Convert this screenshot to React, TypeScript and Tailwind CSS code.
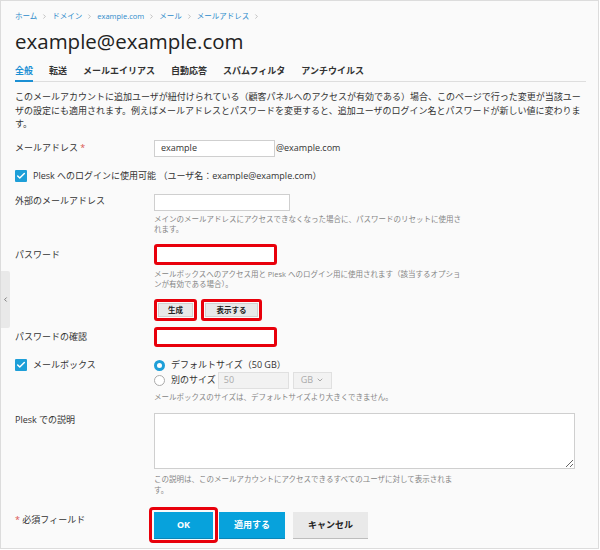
import { Check, ChevronDown, ChevronRight, ChevronLeft } from "lucide-react";

const crumbs = ["ホーム", "ドメイン", "example.com", "メール", "メールアドレス"];
const tabs = ["全般", "転送", "メールエイリアス", "自動応答", "スパムフィルタ", "アンチウイルス"];

function CheckBox() {
    return (
        <span className="flex h-[12px] w-[12px] items-center justify-center rounded-[1px] bg-[#1e9fd8]">
            <Check size={10} strokeWidth={3.5} color="#fff" />
        </span>
    );
}

function Help({ lines }: { lines: string[] }) {
    return (
        <div className="text-[7.5px] leading-[10.5px] text-[#858585]">
            {lines.map((l, i) => (
                <div key={i} className="whitespace-nowrap">
                    {l}
                </div>
            ))}
        </div>
    );
}

export default function App() {
    return (
        <div className="h-[550px] w-[600px] bg-white font-['Open_Sans','Noto_Sans_CJK_JP',sans-serif] text-[#333]">
            <div className="relative h-[549px] w-[599px] overflow-hidden border border-[#dcdcdc] bg-[#fafafa] pl-[14px] pr-[12px] pt-[10px]">
                {/* side collapse handle */}
                <div className="absolute left-0 top-[270px] flex h-[57px] w-[9px] items-center justify-center rounded-r-[2px] bg-[#e9e9e9]">
                    <ChevronLeft size={7} strokeWidth={2.5} color="#555" />
                </div>

                <div className="flex h-[10px] items-center gap-[4px] text-[7.5px] leading-[10px] text-[#2d8bcb]">
                    {crumbs.map((c) => (
                        <span key={c} className="flex items-center gap-[4px]">
                            {c}
                            <ChevronRight size={7} strokeWidth={2} color="#999" />
                        </span>
                    ))}
                </div>

                <h1 className="mt-[7px] h-[26px] text-[20.5px] leading-[26px] text-[#222]">example@example.com</h1>

                <div className="mt-[11px] flex gap-[16px] border-b border-[#dedede]">
                    {tabs.map((t, i) => (
                        <div
                            key={t}
                            className={
                                i === 0
                                    ? "-mb-px border-b-2 border-[#1c90d4] pb-[3px] text-[9px] font-bold leading-[12px] text-[#1c90d4]"
                                    : "-mb-px border-b-2 border-transparent pb-[3px] text-[9px] font-bold leading-[12px] text-[#333]"
                            }
                        >
                            {t}
                        </div>
                    ))}
                </div>

                <div className="mt-[8px] text-[9px] leading-[13.5px] text-[#333]">
                    <div className="whitespace-nowrap">
                        このメールアカウントに追加ユーザが紐付けられている（顧客パネルへのアクセスが有効である）場合、このページで行った変更が当該ユー
                    </div>
                    <div className="whitespace-nowrap">
                        ザの設定にも適用されます。例えばメールアドレスとパスワードを変更すると、追加ユーザのログイン名とパスワードが新しい値に変わりま
                    </div>
                    <div>す。</div>
                </div>

                {/* mail address */}
                <div className="mt-[9px] flex h-[17px] items-center text-[9px]">
                    <div className="w-[139px]">
                        メールアドレス <span className="text-[#d9534f]">*</span>
                    </div>
                    <div className="flex h-[17px] w-[121px] items-center border border-[#cfcfcf] bg-white px-[6px] text-[9px]">
                        example
                    </div>
                    <span className="ml-[1px]">@example.com</span>
                </div>

                <div className="mt-[13px] flex h-[13px] items-center gap-[6px] text-[9px]">
                    <CheckBox />
                    <span>Plesk へのログインに使用可能 （ユーザ名：example@example.com）</span>
                </div>

                {/* external address */}
                <div className="mt-[11px] flex text-[9px]">
                    <div className="w-[139px] leading-[14px]">外部のメールアドレス</div>
                    <div>
                        <div className="h-[17px] w-[136px] border border-[#cfcfcf] bg-white" />
                        <div className="mt-[3px]">
                            <Help lines={["メインのメールアドレスにアクセスできなくなった場合に、パスワードのリセットに使用さ", "れます。"]} />
                        </div>
                    </div>
                </div>

                {/* password */}
                <div className="mt-[9px] flex text-[9px]">
                    <div className="w-[139px] leading-[21px]">パスワード</div>
                    <div>
                        <div className="h-[21px] w-[123px] rounded-[3px] border-[3px] border-[#e8000b] bg-white" />
                        <div className="mt-[4px]">
                            <Help lines={["メールボックスへのアクセス用と Plesk へのログイン用に使用されます（該当するオプショ", "ンが有効である場合）。"]} />
                        </div>
                        <div className="ml-[4px] mt-[13px] flex gap-[12px]">
                            <button className="relative h-[14px] w-[35px] border border-[#d0d0d0] bg-[#e8e8e8] text-[7.5px] font-bold leading-[12px] text-[#222]">
                                生成
                                <span className="absolute -inset-[5px] rounded-[3px] border-[3px] border-[#e8000b]" />
                            </button>
                            <button className="relative h-[14px] w-[53px] border border-[#d0d0d0] bg-[#e8e8e8] text-[7.5px] font-bold leading-[12px] text-[#222]">
                                表示する
                                <span className="absolute -inset-[5px] rounded-[3px] border-[3px] border-[#e8000b]" />
                            </button>
                        </div>
                    </div>
                </div>

                {/* confirm */}
                <div className="mt-[10px] flex text-[9px]">
                    <div className="w-[139px] leading-[20px]">パスワードの確認</div>
                    <div className="h-[20px] w-[123px] rounded-[3px] border-[3px] border-[#e8000b] bg-white" />
                </div>

                {/* mailbox */}
                <div className="mt-[12px] flex text-[9px]">
                    <div className="flex h-[13px] w-[139px] items-center gap-[6px]">
                        <CheckBox />
                        <span>メールボックス</span>
                    </div>
                    <div>
                        <div className="flex h-[13px] items-center gap-[6px]">
                            <span className="h-[11px] w-[11px] rounded-full border-[3px] border-[#1e9fd8] bg-white" />
                            <span>デフォルトサイズ（50 GB）</span>
                        </div>
                        <div className="flex h-[17px] items-center">
                            <span className="h-[11px] w-[11px] rounded-full border border-[#aaa] bg-white" />
                            <span className="ml-[6px]">別のサイズ</span>
                            <div className="ml-[2px] flex h-[17px] w-[71px] items-center border border-[#e0e0e0] bg-[#f2f2f2] px-[5px] text-[#aaa]">
                                50
                            </div>
                            <div className="ml-[4px] flex h-[17px] w-[39px] items-center justify-between border border-[#e0e0e0] bg-[#f2f2f2] px-[7px] text-[#aaa]">
                                GB
                                <ChevronDown size={8} strokeWidth={2.5} color="#999" />
                            </div>
                        </div>
                        <div className="mt-[3px]">
                            <Help lines={["メールボックスのサイズは、デフォルトサイズより大きくできません。"]} />
                        </div>
                    </div>
                </div>

                {/* description */}
                <div className="mt-[11px] flex text-[9px]">
                    <div className="w-[139px] leading-[14px]">Plesk での説明</div>
                    <div>
                        <textarea className="block h-[56px] w-[421px] border border-[#cfcfcf] bg-white" />
                        <div className="mt-[5px]">
                            <Help lines={["この説明は、このメールアカウントにアクセスできるすべてのユーザに対して表示されま", "す。"]} />
                        </div>
                    </div>
                </div>

                {/* footer */}
                <div className="mt-[17px] flex text-[9px]">
                    <div className="w-[139px] leading-[16px]">
                        <span className="text-[#d9534f]">*</span> 必須フィールド
                    </div>
                    <button className="relative h-[26px] w-[59px] bg-[#07a2dc] text-[9px] font-bold text-white shadow-[0_1px_0_#0a86b8]">
                        OK
                        <span className="absolute -inset-[5px] rounded-[4px] border-[3px] border-[#e8000b]" />
                    </button>
                    <button className="ml-[6px] h-[26px] w-[66px] bg-[#07a2dc] text-[9px] font-bold text-white shadow-[0_1px_0_#0a86b8]">
                        適用する
                    </button>
                    <button className="ml-[8px] h-[26px] w-[75px] bg-[#e9e9e9] text-[9px] font-bold text-[#222] shadow-[0_1px_0_#bdbdbd]">
                        キャンセル
                    </button>
                </div>
            </div>
        </div>
    );
}
